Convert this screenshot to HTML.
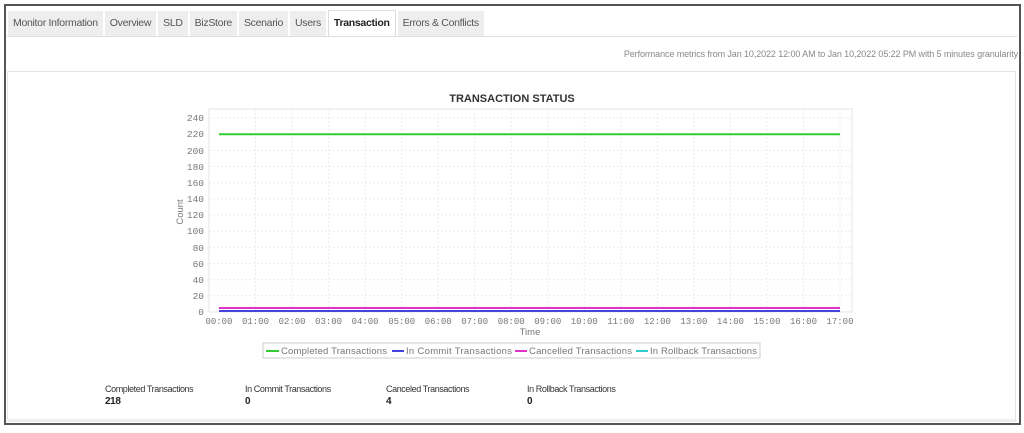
<!DOCTYPE html>
<html><head><meta charset="utf-8"><style>
body{margin:0;width:1024px;height:433px;background:#fff;position:relative;overflow:hidden;font-family:"Liberation Sans",sans-serif}
.outer{position:absolute;left:4px;top:4px;width:1013px;height:417px;border:2px solid #555}
.tabs{position:absolute;left:8px;top:11px;height:25px;display:flex}
.tab{background:#eee;color:#555;font-size:10.5px;line-height:25px;padding:0 5px;margin-right:2px;height:25px;letter-spacing:-0.3px}
.tab.act{background:#fff;color:#222;font-weight:bold;border:1px solid #ddd;border-bottom:none;height:26px;margin-top:-1px}
.line1{position:absolute;left:7px;right:7px;top:36px;border-top:1px solid #ddd}
.perf{position:absolute;right:6px;top:49px;font-size:9px;color:#888;letter-spacing:-0.1px}
.panel{position:absolute;left:7px;top:71px;width:1007px;height:347px;border:1px solid #e5e5e5;border-bottom:3px solid #eee}
.st{position:absolute;top:384px;font-size:9px;color:#333;letter-spacing:-0.4px}
.st b{display:block;font-size:10px;margin-top:2px;color:#222}
</style></head><body>
<div class="outer"></div>
<div class="tabs">
<div class="tab">Monitor Information</div><div class="tab">Overview</div><div class="tab">SLD</div><div class="tab">BizStore</div><div class="tab">Scenario</div><div class="tab">Users</div><div class="tab act">Transaction</div><div class="tab">Errors &amp; Conflicts</div>
</div>
<div class="line1"></div>
<div class="perf">Performance metrics from Jan 10,2022 12:00 AM to Jan 10,2022 05:22 PM with 5 minutes granularity</div>
<div class="panel"></div>
<svg width="1024" height="433" style="position:absolute;left:0;top:0" font-family="Liberation Mono, DejaVu Sans Mono, monospace">
<text x="512" y="102" text-anchor="middle" font-family="Liberation Sans" font-weight="bold" font-size="11" fill="#333">TRANSACTION STATUS</text>
<rect x="209" y="109" width="643" height="203" fill="#fff" stroke="#e6e6e6"/>
<g stroke="#ececec" stroke-dasharray="2,2">
<line x1="209" x2="852" y1="295.8" y2="295.8"/><line x1="209" x2="852" y1="279.7" y2="279.7"/><line x1="209" x2="852" y1="263.5" y2="263.5"/><line x1="209" x2="852" y1="247.3" y2="247.3"/><line x1="209" x2="852" y1="231.2" y2="231.2"/><line x1="209" x2="852" y1="215" y2="215"/><line x1="209" x2="852" y1="198.9" y2="198.9"/><line x1="209" x2="852" y1="182.7" y2="182.7"/><line x1="209" x2="852" y1="166.5" y2="166.5"/><line x1="209" x2="852" y1="150.4" y2="150.4"/><line x1="209" x2="852" y1="118.1" y2="118.1"/>
<line y1="109" y2="312" x1="255.5" x2="255.5"/><line y1="109" y2="312" x1="292.1" x2="292.1"/><line y1="109" y2="312" x1="328.6" x2="328.6"/><line y1="109" y2="312" x1="365.1" x2="365.1"/><line y1="109" y2="312" x1="401.7" x2="401.7"/><line y1="109" y2="312" x1="438.2" x2="438.2"/><line y1="109" y2="312" x1="474.7" x2="474.7"/><line y1="109" y2="312" x1="511.2" x2="511.2"/><line y1="109" y2="312" x1="547.8" x2="547.8"/><line y1="109" y2="312" x1="584.3" x2="584.3"/><line y1="109" y2="312" x1="620.8" x2="620.8"/><line y1="109" y2="312" x1="657.4" x2="657.4"/><line y1="109" y2="312" x1="693.9" x2="693.9"/><line y1="109" y2="312" x1="730.4" x2="730.4"/><line y1="109" y2="312" x1="767" x2="767"/><line y1="109" y2="312" x1="803.5" x2="803.5"/><line y1="109" y2="312" x1="840" x2="840"/>
</g>
<g font-size="9.5" fill="#777" text-anchor="end">
<text x="204" y="315">0</text><text x="204" y="299">20</text><text x="204" y="283">40</text><text x="204" y="267">60</text><text x="204" y="251">80</text><text x="204" y="234">100</text><text x="204" y="218">120</text><text x="204" y="202">140</text><text x="204" y="186">160</text><text x="204" y="170">180</text><text x="204" y="154">200</text><text x="204" y="137">220</text><text x="204" y="121">240</text>
</g>
<text transform="translate(183,212) rotate(-90)" text-anchor="middle" font-size="9.5" fill="#777" font-family="Liberation Sans">Count</text>
<g font-size="9" fill="#777" text-anchor="middle">
<text x="219" y="324">00:00</text><text x="255.5" y="324">01:00</text><text x="292.1" y="324">02:00</text><text x="328.6" y="324">03:00</text><text x="365.1" y="324">04:00</text><text x="401.7" y="324">05:00</text><text x="438.2" y="324">06:00</text><text x="474.7" y="324">07:00</text><text x="511.2" y="324">08:00</text><text x="547.8" y="324">09:00</text><text x="584.3" y="324">10:00</text><text x="620.8" y="324">11:00</text><text x="657.4" y="324">12:00</text><text x="693.9" y="324">13:00</text><text x="730.4" y="324">14:00</text><text x="767" y="324">15:00</text><text x="803.5" y="324">16:00</text><text x="840" y="324">17:00</text>
</g>
<text x="530" y="335" text-anchor="middle" font-size="9.5" fill="#777" font-family="Liberation Sans">Time</text>
<line x1="219" x2="840" y1="134.2" y2="134.2" stroke="#33cc33" stroke-width="2"/>
<line x1="219" x2="840" y1="311" y2="311" stroke="#4444dd" stroke-width="2"/>
<line x1="219" x2="840" y1="308" y2="308" stroke="#dd33cc" stroke-width="2"/>
<rect x="263" y="343" width="497" height="15" fill="#fff" stroke="#ccc"/>
<g font-size="9.5" fill="#777" font-family="Liberation Sans">
<line x1="266" x2="279" y1="351" y2="351" stroke="#33cc33" stroke-width="2"/><text x="281" y="354" textLength="106">Completed Transactions</text>
<line x1="392" x2="404" y1="351" y2="351" stroke="#4444dd" stroke-width="2"/><text x="406" y="354" textLength="106">In Commit Transactions</text>
<line x1="515" x2="527" y1="351" y2="351" stroke="#dd33cc" stroke-width="2"/><text x="529" y="354" textLength="103">Cancelled Transactions</text>
<line x1="636" x2="648" y1="351" y2="351" stroke="#33cccc" stroke-width="2"/><text x="650" y="354" textLength="107">In Rollback Transactions</text>
</g>
</svg>
<div class="st" style="left:105px">Completed Transactions<b>218</b></div>
<div class="st" style="left:245px">In Commit Transactions<b>0</b></div>
<div class="st" style="left:386px">Canceled Transactions<b>4</b></div>
<div class="st" style="left:527px">In Rollback Transactions<b>0</b></div>
</body></html>
